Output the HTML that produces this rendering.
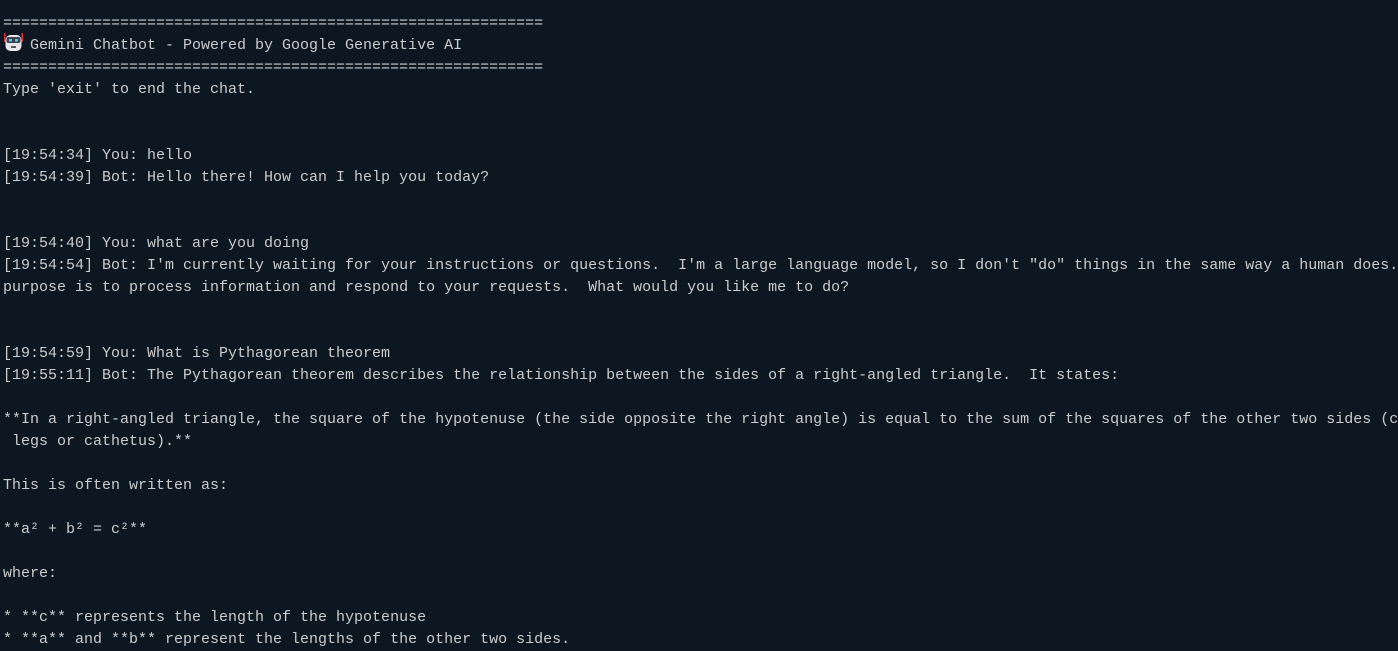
<!DOCTYPE html>
<html><head><meta charset="utf-8"><style>
html,body{margin:0;padding:0;background:#0c1721;width:1398px;height:642px;overflow:hidden}
pre{margin:0;position:absolute;left:3px;top:13px;font-family:"Liberation Mono",monospace;font-size:15px;line-height:22px;color:#cccccc;white-space:pre}
.bot{display:inline-block;width:18px;height:15px;vertical-align:-2px;position:relative;margin-right:9px}
</style></head><body><pre>============================================================
<span class="bot"><svg width="21" height="21" viewBox="0 0 21 21" style="position:absolute;top:-4px;left:0px"><rect x="1" y="1" width="1.5" height="9" fill="#d33"/><rect x="18.5" y="1" width="1.5" height="9" fill="#d33"/><rect x="2.5" y="3" width="16" height="16" rx="5" fill="#e6e6ea"/><rect x="3.5" y="5" width="14" height="6" rx="2" fill="#3a4250"/><rect x="6" y="7" width="3" height="2.5" fill="#5cc8f0"/><rect x="12" y="7" width="3" height="2.5" fill="#5cc8f0"/><rect x="8" y="14" width="5" height="2" fill="#555"/></svg></span>Gemini Chatbot - Powered by Google Generative AI
============================================================
Type 'exit' to end the chat.


[19:54:34] You: hello
[19:54:39] Bot: Hello there! How can I help you today?


[19:54:40] You: what are you doing
[19:54:54] Bot: I'm currently waiting for your instructions or questions.  I'm a large language model, so I don't "do" things in the same way a human does.  My
purpose is to process information and respond to your requests.  What would you like me to do?


[19:54:59] You: What is Pythagorean theorem
[19:55:11] Bot: The Pythagorean theorem describes the relationship between the sides of a right-angled triangle.  It states:

**In a right-angled triangle, the square of the hypotenuse (the side opposite the right angle) is equal to the sum of the squares of the other two sides (called
 legs or cathetus).**

This is often written as:

**a² + b² = c²**

where:

* **c** represents the length of the hypotenuse
* **a** and **b** represent the lengths of the other two sides.
</pre></body></html>
